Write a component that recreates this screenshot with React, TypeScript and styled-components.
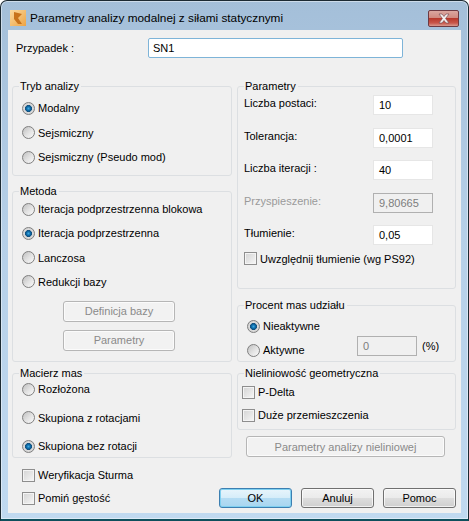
import styled, {createGlobalStyle} from "styled-components";
import {FC, ReactNode} from "react";

const GlobalStyle = createGlobalStyle`
  html, body {
    margin: 0;
    padding: 0;
    background: #fff;
  }
`

const radioRows = {
    mode: ["Modalny", "Sejsmiczny", "Sejsmiczny (Pseudo mod)"],
    method: ["Iteracja podprzestrzenna blokowa", "Iteracja podprzestrzenna", "Lanczosa", "Redukcji bazy"],
    mass: ["Rozłożona", "Skupiona z rotacjami", "Skupiona bez rotacji"],
}

const paramRows = [
    {label: "Liczba postaci:", value: "10"},
    {label: "Tolerancja:", value: "0,0001"},
    {label: "Liczba iteracji :", value: "40"},
    {label: "Przyspieszenie:", value: "9,80665", disabled: true},
    {label: "Tłumienie:", value: "0,05"},
]

const RadioOption: FC<{ label: string, checked?: boolean }> = ({label, checked}) => (
    <OptionRow>
        <RadioDot checked={!!checked}/>
        <span>{label}</span>
    </OptionRow>
)

const CheckOption: FC<{ label: string }> = ({label}) => (
    <OptionRow>
        <CheckBox/>
        <span>{label}</span>
    </OptionRow>
)

const Group: FC<{ title: string, height: number, children: ReactNode }> = ({title, height, children}) => (
    <GroupBox height={height}>
        <GroupTitle>{title}</GroupTitle>
        {children}
    </GroupBox>
)

const AppLogo = () => (
    <svg width="16" height="16" viewBox="0 0 16 16">
        <defs>
            <linearGradient id="logoBg" x1="0" y1="0" x2="1" y2="1">
                <stop offset="0" stopColor="#fbd9a0"/>
                <stop offset="1" stopColor="#eda445"/>
            </linearGradient>
        </defs>
        <rect width="16" height="16" fill="url(#logoBg)"/>
        <path d="M4 2 L12 4 L8 8 L12 14 L8 14 L4 9 Z" fill="#c8721c"/>
    </svg>
)

export default function App() {
    return (
        <Window>
            <GlobalStyle/>
            <TitleBar>
                <AppLogo/>
                <WindowTitle>Parametry analizy modalnej z siłami statycznymi</WindowTitle>
                <CloseButton>
                    <svg width="16" height="11" viewBox="0 0 16 11">
                        <path d="M3 1 L6 1 L8 3.5 L10 1 L13 1 L9.6 5.5 L13 10 L10 10 L8 7.5 L6 10 L3 10 L6.4 5.5 Z"
                              fill="#f4f0f0" stroke="#7a5058" strokeWidth="0.7"/>
                    </svg>
                </CloseButton>
            </TitleBar>
            <Client>
                <CaseRow>
                    <CaseLabel>Przypadek :</CaseLabel>
                    <CaseInput>SN1</CaseInput>
                </CaseRow>
                <Columns>
                    <Column>
                        <Group title="Tryb analizy" height={97}>
                            <OptionList top={7} gap={8.5}>
                                {radioRows.mode.map((row, i) => <RadioOption key={row} label={row} checked={i === 0}/>)}
                            </OptionList>
                        </Group>
                        <Spacer size={8}/>
                        <Group title="Metoda" height={178}>
                            <OptionList top={3} gap={8.3}>
                                {radioRows.method.map((row, i) => <RadioOption key={row} label={row} checked={i === 1}/>)}
                            </OptionList>
                            <GroupButtons>
                                <PushButton width={112} height={21} disabled>Definicja bazy</PushButton>
                                <PushButton width={112} height={21} disabled>Parametry</PushButton>
                            </GroupButtons>
                        </Group>
                        <Spacer size={4}/>
                        <Group title="Macierz mas" height={92}>
                            <OptionList top={1} gap={12.5}>
                                {radioRows.mass.map((row, i) => <RadioOption key={row} label={row} checked={i === 2}/>)}
                            </OptionList>
                        </Group>
                    </Column>
                    <Column>
                        <Group title="Parametry" height={210}>
                            <ParamList>
                                {paramRows.map(row => (
                                    <ParamRow key={row.label}>
                                        <ParamLabel disabled={!!row.disabled}>{row.label}</ParamLabel>
                                        <ValueInput disabled={!!row.disabled}>{row.value}</ValueInput>
                                    </ParamRow>
                                ))}
                                <DampingCheck>
                                    <CheckOption label="Uwzględnij tłumienie (wg PS92)"/>
                                </DampingCheck>
                            </ParamList>
                        </Group>
                        <Spacer size={9}/>
                        <Group title="Procent mas udziału" height={64}>
                            <ShareList>
                                <RadioOption label="Nieaktywne" checked/>
                                <ShareRow>
                                    <ShareRadio>
                                        <RadioOption label="Aktywne"/>
                                    </ShareRadio>
                                    <ValueInput disabled>0</ValueInput>
                                    <ShareUnit>(%)</ShareUnit>
                                </ShareRow>
                            </ShareList>
                        </Group>
                        <Spacer size={4}/>
                        <Group title="Nieliniowość geometryczna" height={64}>
                            <OptionList top={4} gap={7} left={4}>
                                <CheckOption label="P-Delta"/>
                                <CheckOption label="Duże przemieszczenia"/>
                            </OptionList>
                        </Group>
                        <WideButtonRow>
                            <PushButton width={199} height={21} disabled>Parametry analizy nieliniowej</PushButton>
                        </WideButtonRow>
                    </Column>
                </Columns>
                <Footer>
                    <FooterChecks>
                        <CheckOption label="Weryfikacja Sturma"/>
                        <CheckOption label="Pomiń gęstość"/>
                    </FooterChecks>
                    <FooterButtons>
                        <PushButton width={73} height={20} primary>OK</PushButton>
                        <PushButton width={73} height={20}>Anuluj</PushButton>
                        <PushButton width={73} height={20}>Pomoc</PushButton>
                    </FooterButtons>
                </Footer>
            </Client>
        </Window>
    );
}

const Window = styled.div`
  box-sizing: border-box;
  width: 469px;
  height: 521px;
  display: flex;
  flex-direction: column;
  overflow: hidden;
  border: 1px solid #1c2a33;
  border-bottom: 2px solid #0e4f5c;
  border-radius: 7px 7px 0 0;
  background: linear-gradient(180deg, #a4bfd9 0%, #b6d0e8 45%, #c0d9f0 100%);
  box-shadow: inset 0 0 0 1px rgba(255, 255, 255, 0.45);
  font-family: "Liberation Sans", Arial, sans-serif;
  font-size: 11px;
  color: #000;
`
const TitleBar = styled.div`
  box-sizing: border-box;
  flex: none;
  height: 29px;
  display: flex;
  align-items: center;
  gap: 4px;
  padding: 5px 9px 0 9px;
`
const WindowTitle = styled.div`
  flex: 1;
  font-size: 11.8px;
  white-space: nowrap;
`
const CloseButton = styled.div`
  box-sizing: border-box;
  width: 31px;
  height: 17px;
  margin-top: 1px;
  display: flex;
  align-items: center;
  justify-content: center;
  border: 1px solid #6d3a42;
  border-radius: 2px;
  background: linear-gradient(180deg, #dba7a0 0%, #d08a80 45%, #b8392c 50%, #c8564a 80%, #d99a90 100%);
`
const Client = styled.div`
  box-sizing: border-box;
  height: 483px;
  margin: 0 7px;
  padding: 8px 5px 0 4px;
  background: #f0f0f0;
`
const CaseRow = styled.div`
  height: 20px;
  display: flex;
  align-items: center;
`
const CaseLabel = styled.div`
  width: 136px;
  padding-left: 4px;
  box-sizing: border-box;
`
const CaseInput = styled.div`
  box-sizing: border-box;
  width: 255px;
  height: 20px;
  padding-left: 4px;
  line-height: 18px;
  background: #fff;
  border: 1px solid #7eb4d8;
  border-radius: 2px;
`
const Columns = styled.div`
  display: grid;
  grid-template-columns: 220px 219px;
  column-gap: 5px;
  margin-top: 21px;
  height: 379px;
`
const Column = styled.div`
  display: flex;
  flex-direction: column;
`
const Spacer = styled.div<{ size: number }>`
  flex: none;
  height: ${props => props.size}px;
`
const GroupBox = styled.fieldset<{ height: number }>`
  box-sizing: border-box;
  flex: none;
  height: ${props => props.height}px;
  margin: 0;
  padding: 0;
  border: 1px solid #dcdfe2;
  border-radius: 3px;
`
const GroupTitle = styled.legend`
  margin-left: 6px;
  padding: 0 2px 0 1px;
  line-height: 14px;
`
const OptionList = styled.div<{ top: number, gap: number, left?: number }>`
  display: flex;
  flex-direction: column;
  gap: ${props => props.gap}px;
  padding: ${props => props.top}px 0 0 ${props => props.left ?? 9}px;
`
const OptionRow = styled.div`
  height: 16px;
  display: flex;
  align-items: center;
  gap: 3px;
  white-space: nowrap;
`
const RadioDot = styled.span<{ checked: boolean }>`
  box-sizing: border-box;
  flex: none;
  width: 13px;
  height: 13px;
  border-radius: 50%;
  border: 1px solid #7f7f7f;
  background: ${props => props.checked
    ? "radial-gradient(circle at 50% 50%, #3fa9e0 0, #0b6aa8 2px, #14507c 3.2px, #dcdcdc 3.8px, #c8c8c8 100%)"
    : "linear-gradient(135deg, #c0c0c0 0%, #e4e4e4 55%, #fafafa 100%)"};
`
const CheckBox = styled.span`
  box-sizing: border-box;
  flex: none;
  width: 13px;
  height: 13px;
  border: 1px solid #8e8e8e;
  background: linear-gradient(135deg, #d4d4d4 0%, #e8e8e8 60%, #f8f8f8 100%);
  box-shadow: inset 0 0 0 1px #f4f4f4;
`
const GroupButtons = styled.div`
  display: flex;
  flex-direction: column;
  align-items: flex-start;
  gap: 8px;
  margin: 11px 0 0 50px;
`
const PushButton = styled.div<{ width: number, height: number, disabled?: boolean, primary?: boolean }>`
  box-sizing: border-box;
  flex: none;
  width: ${props => props.width}px;
  height: ${props => props.height}px;
  display: flex;
  align-items: center;
  justify-content: center;
  border-radius: 3px;
  border: 1px solid ${props => props.disabled ? "#b6b6b6" : props.primary ? "#3c7fb1" : "#707070"};
  color: ${props => props.disabled ? "#8a8a8a" : "#000"};
  background: ${props => props.disabled
    ? "#f2f2f2"
    : props.primary
        ? "linear-gradient(180deg, #e8f5fc 0%, #d6edf9 48%, #b4dcf3 52%, #a8d6f0 100%)"
        : "linear-gradient(180deg, #f2f2f2 0%, #ebebeb 48%, #dddddd 52%, #cfcfcf 100%)"};
  box-shadow: ${props => props.primary ? "inset 0 0 0 1px #7fd0f0" : "inset 0 0 0 1px rgba(255, 255, 255, 0.7)"};
`
const ParamList = styled.div`
  display: flex;
  flex-direction: column;
  gap: 12.5px;
  padding: 2px 22px 0 6px;
`
const ParamRow = styled.div`
  display: flex;
  justify-content: space-between;
  align-items: flex-start;
  height: 20px;
`
const ParamLabel = styled.span<{ disabled: boolean }>`
  line-height: 16px;
  color: ${props => props.disabled ? "#9a9a9a" : "#000"};
`
const ValueInput = styled.div<{ disabled: boolean }>`
  box-sizing: border-box;
  flex: none;
  width: 60px;
  height: 20px;
  padding-left: 5px;
  line-height: 19px;
  background: ${props => props.disabled ? "#f0f0f0" : "#fff"};
  border: 1px solid ${props => props.disabled ? "#b0b0b0" : "#e6e6e6"};
  color: ${props => props.disabled ? "#7d7d7d" : "#000"};
`
const DampingCheck = styled.div`
  margin-top: -7px;
`
const ShareList = styled.div`
  display: flex;
  flex-direction: column;
  gap: 2px;
  padding: 6px 0 0 9px;
`
const ShareRow = styled.div`
  display: flex;
  align-items: flex-start;
  height: 20px;
`
const ShareRadio = styled.div`
  width: 110px;
  padding-top: 6px;
`
const ShareUnit = styled.span`
  margin-left: 5px;
  line-height: 20px;
`
const WideButtonRow = styled.div`
  display: flex;
  margin: 6px 0 0 9px;
`
const Footer = styled.div`
  display: flex;
  justify-content: space-between;
  align-items: flex-start;
`
const FooterChecks = styled.div`
  display: flex;
  flex-direction: column;
  gap: 7px;
  padding: 9px 0 0 10px;
`
const FooterButtons = styled.div`
  display: flex;
  gap: 9px;
  padding: 30px 0 0 0;
`
